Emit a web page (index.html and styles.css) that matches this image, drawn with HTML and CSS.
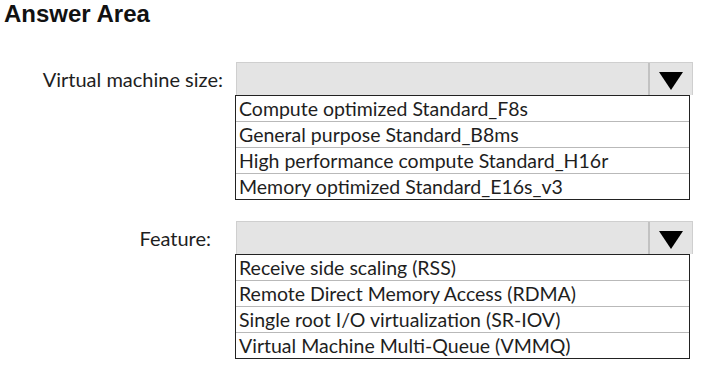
FILE: index.html
```html
<!DOCTYPE html>
<html>
  <head>
    <title>Answer Area</title>
    <meta charset="UTF-8">
    <link rel="stylesheet" href="styles.css">
  </head>
  <body>

<h1 class="headline">Answer Area</h1>

<!-- Virtual machine size -->
<div class="field first">
<div class="label">Virtual machine size:</div>
<div class="control">
<div class="select"><span class="arrow"></span></div>
<div class="options">
<div class="option">Compute optimized Standard_F8s</div>
<div class="option">General purpose Standard_B8ms</div>
<div class="option">High performance compute Standard_H16r</div>
<div class="option">Memory optimized Standard_E16s_v3</div>
</div>
</div>
</div>

<!-- Feature -->
<div class="field">
<div class="label short">Feature:</div>
<div class="control">
<div class="select"><span class="arrow"></span></div>
<div class="options">
<div class="option">Receive side scaling (RSS)</div>
<div class="option">Remote Direct Memory Access (RDMA)</div>
<div class="option">Single root I/O virtualization (SR-IOV)</div>
<div class="option">Virtual Machine Multi-Queue (VMMQ)</div>
</div>
</div>
</div>

  </body>
</html>
```

FILE: styles.css
```css
body{
margin: 0;
background-color: white;
color: #1e1e1e;
font-family: Lato, "Open Sans", sans-serif;
}

.headline{
margin: 0;
padding-left: 4px;
font-family: "Liberation Sans", Arial, sans-serif;
font-size: 24px;
line-height: 28px;
font-weight: bold;
color: #111;
}

.field{
display: grid;
grid-template-columns: 236px 457px;
margin-top: 21px;
}

.field.first{
margin-top: 34px;
}

.label{
height: 34px;
line-height: 34px;
font-size: 20px;
text-align: right;
padding-right: 13px;
}

.label.short{
padding-right: 25px;
}

.select{
height: 32px;
display: flex;
justify-content: flex-end;
background-color: #e4e4e4;
border: 1px solid #cfcfcf;
border-bottom: none;
}

.arrow{
width: 42px;
border-left: 2px solid #c2c2c2;
display: flex;
justify-content: center;
align-items: center;
}

.arrow::after{
content: "";
border-left: 12px solid transparent;
border-right: 12px solid transparent;
border-top: 18px solid black;
margin-top: 4px;
}

.options{
width: 453px;
margin-left: -1px;
border: 1px solid #222;
}

.option{
height: 25px;
line-height: 26px;
padding-left: 3px;
font-size: 19.5px;
border-top: 1px solid #b9b9b9;
}

.option:first-child{
border-top: none;
}
```
